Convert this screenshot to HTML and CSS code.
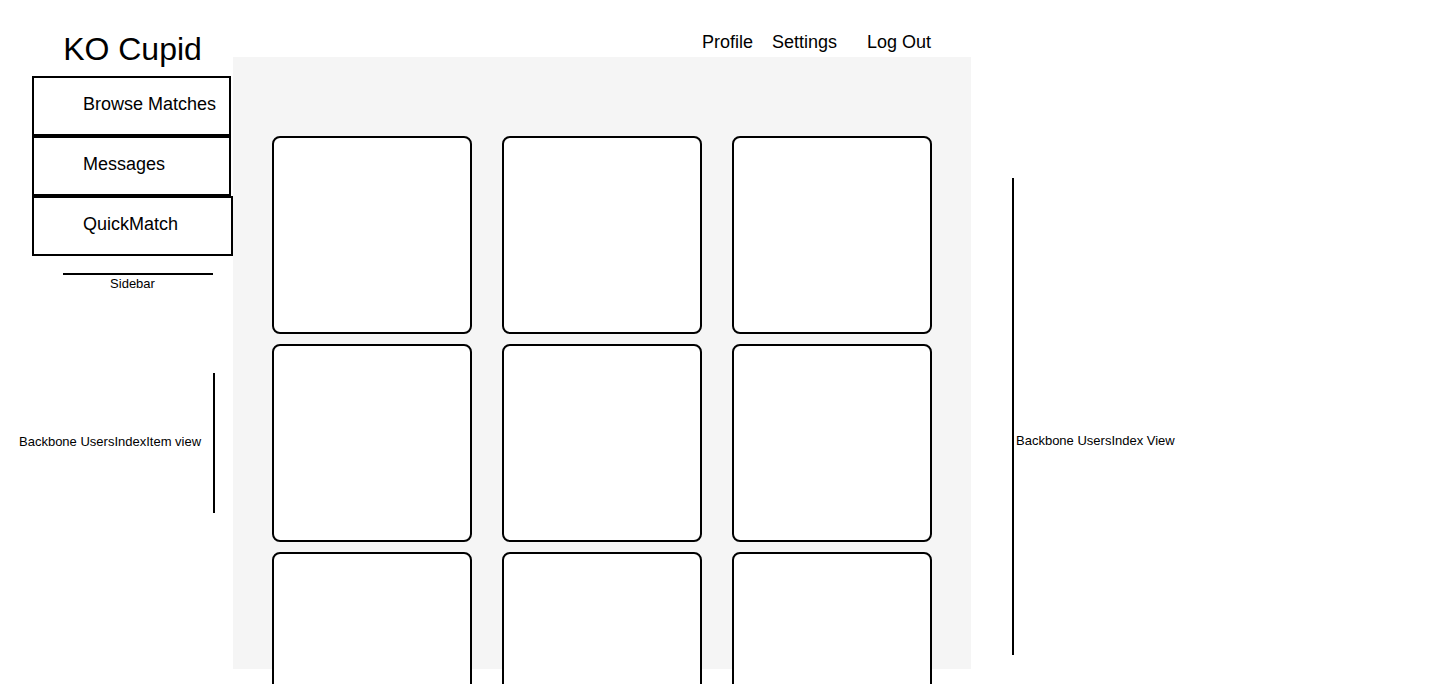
FILE: index.html
```html
<!DOCTYPE html>
<html>
  <head>
    <meta charset="utf-8">
    <meta name="viewport" content="width=device-width, initial-scale=1, shrink-to-fit=no">
    <title>KO Cupid - Browse Matches</title>
    <link rel="stylesheet" href="styles.css">
  </head>
  <body>
    <div class="page">
      <!-- Sidebar -->
      <div class="sidebar">
        <h1 class="logo">KO Cupid</h1>
        <ul class="side-nav">
          <li class="side-item"><a href="#/matches">Browse Matches</a></li>
          <li class="side-item"><a href="#/messages">Messages</a></li>
          <li class="side-item side-item-last"><a href="#/quickmatch">QuickMatch</a></li>
        </ul>
        <div class="caption">
          <div class="caption-rule"></div>
          <p class="caption-text">Sidebar</p>
        </div>
        <div class="note note-left">
          <p class="note-text">Backbone UsersIndexItem view</p>
          <div class="note-rule"></div>
        </div>
      </div>

      <!-- Users index -->
      <div class="main">
        <div class="top-nav">
          <a href="#/profile" class="top-link">Profile</a>
          <a href="#/settings" class="top-link top-link-settings">Settings</a>
          <a href="#/logout" class="top-link top-link-logout">Log Out</a>
        </div>
        <div class="users-index">
          <div class="user-card"></div>
          <div class="user-card"></div>
          <div class="user-card"></div>
          <div class="user-card"></div>
          <div class="user-card"></div>
          <div class="user-card"></div>
          <div class="user-card"></div>
          <div class="user-card"></div>
          <div class="user-card"></div>
        </div>
      </div>

      <div class="note note-right">
        <div class="note-rule"></div>
        <p class="note-text">Backbone UsersIndex View</p>
      </div>
    </div>
  </body>
</html>
```

FILE: styles.css
```css
body{margin:0;padding:0;font-family:'Liberation Sans',Arial,Helvetica,sans-serif;font-size:18px;color:#000;background:#fff}
*{box-sizing:border-box}
a{color:#000;text-decoration:none}
p,ul,h1{margin:0;padding:0}
ul{list-style:none}

.page{display:flex;align-items:flex-start;min-height:750px}

/* sidebar */
.sidebar{width:233px;flex:0 0 233px}
.logo{margin:31px 0 8px 32px;width:201px;font-size:32px;font-weight:normal;line-height:37px;text-align:center}
.side-nav{margin-left:32px}
.side-item{width:199px;height:60px;border:2px solid #000;padding:16px 0 0 49px;line-height:21px}
.side-item-last{width:201px}
.caption{margin:17px 0 0 32px;width:201px}
.caption-rule{width:150px;height:2px;margin-left:31px;background:#000}
.caption-text{padding-top:1px;font-size:13px;line-height:15px;text-align:center}

/* annotations */
.note{display:flex;align-items:flex-start}
.note-text{font-size:13px;line-height:15px;white-space:nowrap}
.note-rule{width:2px;background:#000}
.note-left{margin-top:82px;height:140px}
.note-left .note-text{margin:61px 12px 0 19px}
.note-left .note-rule{height:140px}
.note-right{margin:178px 0 0 41px}
.note-right .note-rule{height:477px}
.note-right .note-text{margin:255px 0 0 2px}

/* main */
.main{width:738px;flex:0 0 738px}
.top-nav{display:flex;justify-content:flex-end;height:57px;padding:32px 40px 0 0;line-height:21px}
.top-link-settings{margin-left:19px}
.top-link-logout{margin-left:30px}
.users-index{display:grid;grid-template-columns:repeat(3,200px);grid-auto-rows:198px;column-gap:30px;row-gap:10px;
  height:612px;padding:79px 39px 0;background:#f5f5f5}
.user-card{border:2px solid #000;border-radius:8px;background:#fff}
```
